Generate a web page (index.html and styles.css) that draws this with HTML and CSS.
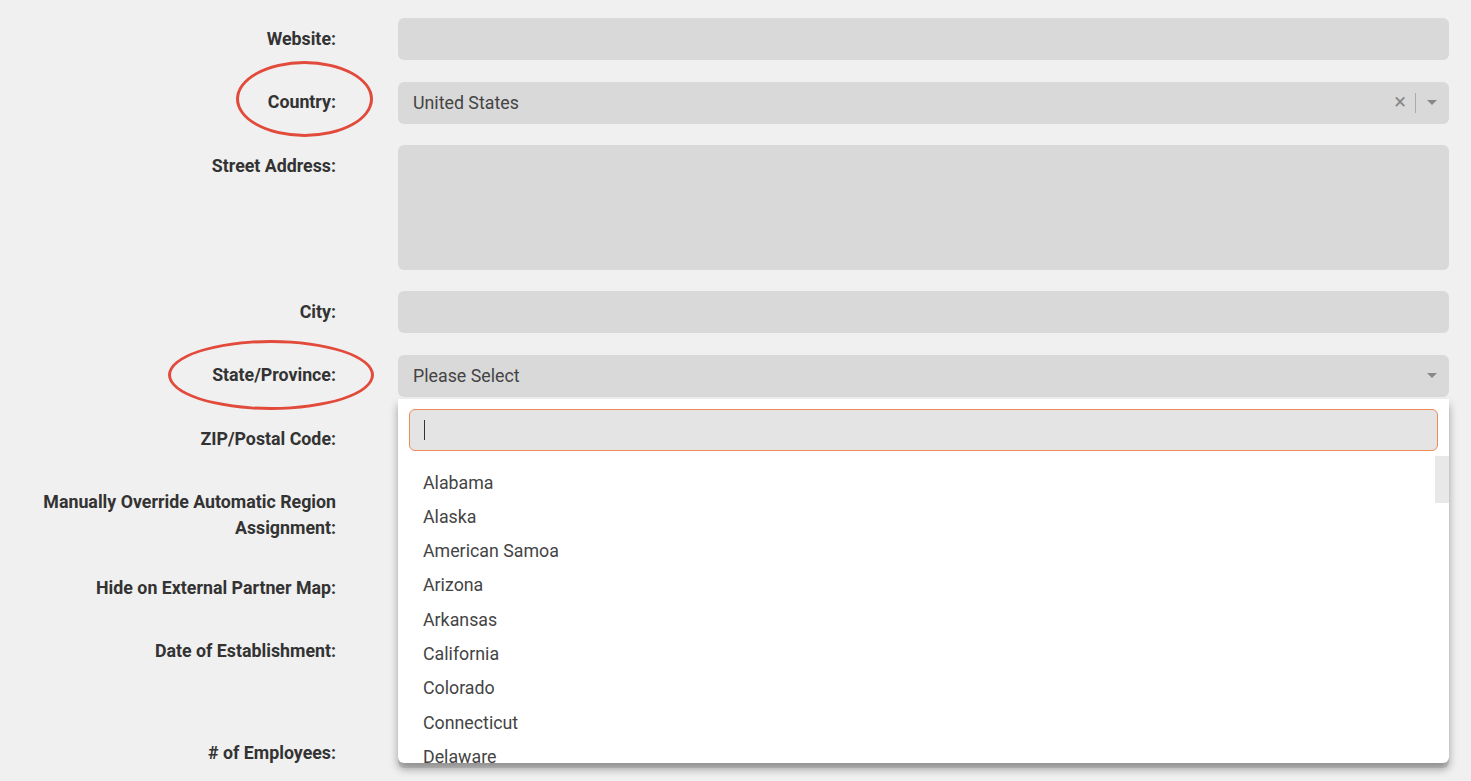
FILE: index.html
```html
<!DOCTYPE html>
<html lang="en">
  <head>
    <meta charset="utf-8">
    <meta name="viewport" content="width=device-width, initial-scale=1">
    <title>Partner details</title>
    <link rel="stylesheet" href="styles.css">
  </head>
  <body>
    <form class="form">
      <div class="row">
        <label class="row__label">Website:</label>
        <div class="row__field"><div class="input"></div></div>
      </div>

      <div class="row">
        <label class="row__label row__label--marked">Country:<span class="mark mark--country"></span></label>
        <div class="row__field">
          <div class="input select">
            <span class="select__value">United States</span>
            <span class="select__clear">&times;</span>
            <span class="select__sep"></span>
            <span class="select__arrow"></span>
          </div>
        </div>
      </div>

      <div class="row">
        <label class="row__label">Street Address:</label>
        <div class="row__field"><div class="input input--area"></div></div>
      </div>

      <div class="row">
        <label class="row__label">City:</label>
        <div class="row__field"><div class="input"></div></div>
      </div>

      <div class="row">
        <label class="row__label row__label--marked">State/Province:<span class="mark mark--state"></span></label>
        <div class="row__field dropdown open">
          <div class="input select">
            <span class="select__value">Please Select</span>
            <span class="select__arrow"></span>
          </div>
          <div class="dropdown-menu">
            <div class="search"><span class="caret"></span></div>
            <div class="options">
              <ul class="options__list">
                <li>Alabama</li>
                <li>Alaska</li>
                <li>American Samoa</li>
                <li>Arizona</li>
                <li>Arkansas</li>
                <li>California</li>
                <li>Colorado</li>
                <li>Connecticut</li>
                <li>Delaware</li>
              </ul>
              <div class="options__thumb"></div>
            </div>
          </div>
        </div>
      </div>

      <div class="row">
        <label class="row__label">ZIP/Postal Code:</label>
        <div class="row__field"><div class="input"></div></div>
      </div>

      <div class="row row--tall">
        <label class="row__label">Manually Override Automatic Region Assignment:</label>
        <div class="row__field"><div class="input"></div></div>
      </div>

      <div class="row">
        <label class="row__label">Hide on External Partner Map:</label>
        <div class="row__field"><div class="input"></div></div>
      </div>

      <div class="row row--date">
        <label class="row__label">Date of Establishment:</label>
        <div class="row__field"><div class="input"></div></div>
      </div>

      <div class="row">
        <label class="row__label"># of Employees:</label>
        <div class="row__field"><div class="input input--short"></div></div>
      </div>
    </form>
  </body>
</html>
```

FILE: styles.css
```css
html, body {
  margin: 0;
  height: 100%;
  overflow: hidden;
  background: #f0f0f0;
  font-family: Roboto, "Liberation Sans", sans-serif;
  color: #333;
}

.form {
  padding: 18px 22px 0 20px;
}

.row {
  display: flex;
  gap: 62px;
  margin-bottom: 21.5px;
}
.row--tall {
  height: 64px;
}
.row--date {
  height: 80px;
}

.row__label {
  position: relative;
  width: 316px;
  flex: none;
  padding-top: 7.5px;
  text-align: right;
  font-size: 17.8px;
  font-weight: 700;
  line-height: 26px;
  color: #333;
}

.row__field {
  flex: 1;
  position: relative;
}

.input {
  height: 42px;
  background: #d9d9d9;
  border-radius: 6px;
  box-sizing: border-box;
}
.input--area {
  height: 124.5px;
}
.input--short {
  height: 36px;
}

.select {
  display: flex;
  align-items: center;
  padding: 0 12px 0 15px;
  font-size: 17.8px;
  color: #444;
}
.select__value {
  flex: 1;
}
.select__clear {
  font-size: 22px;
  line-height: 1;
  color: #888;
  margin-right: 9px;
  margin-top: -2px;
}
.select__sep {
  width: 1px;
  height: 20px;
  background: #aaa;
  margin-right: 11px;
}
.select__arrow {
  width: 0;
  height: 0;
  border-style: solid;
  border-width: 5px 5px 0 5px;
  border-color: #888 transparent transparent transparent;
}

/* annotation circles */
.mark {
  position: absolute;
  border: 3px solid #e24a3b;
  border-radius: 50%;
  box-sizing: border-box;
}
.mark--country {
  right: -37px;
  top: -21px;
  width: 137px;
  height: 76px;
}
.mark--state {
  right: -38px;
  top: -15px;
  width: 206px;
  height: 70px;
}

/* open state dropdown */
.dropdown-menu {
  display: none;
  position: absolute;
  top: 44px;
  left: 0;
  right: 0;
  height: 364px;
  background: #fff;
  border-radius: 0 0 6px 6px;
  box-shadow: 0 6px 8px rgba(0, 0, 0, 0.35);
  box-sizing: border-box;
  padding: 10px 0 0 0;
  overflow: hidden;
  z-index: 5;
}
.dropdown.open .dropdown-menu {
  display: block;
}

.search {
  margin: 0 11px 0 11px;
  height: 42px;
  background: #e4e4e4;
  border: 1px solid #ec8a5a;
  border-radius: 6px;
  box-sizing: border-box;
  display: flex;
  align-items: center;
  padding-left: 14px;
}
.caret {
  width: 1px;
  height: 20px;
  background: #333;
}

.options {
  position: relative;
  margin-top: 5px;
}
.options__list {
  list-style: none;
  margin: 0;
  padding: 10px 0 0 0;
}
.options__list li {
  height: 34.3px;
  line-height: 34.3px;
  padding-left: 25px;
  font-size: 17.8px;
  color: #444;
}
.options__thumb {
  position: absolute;
  top: 0;
  right: 0;
  width: 14px;
  height: 47px;
  background: #e8e8e8;
}
```
